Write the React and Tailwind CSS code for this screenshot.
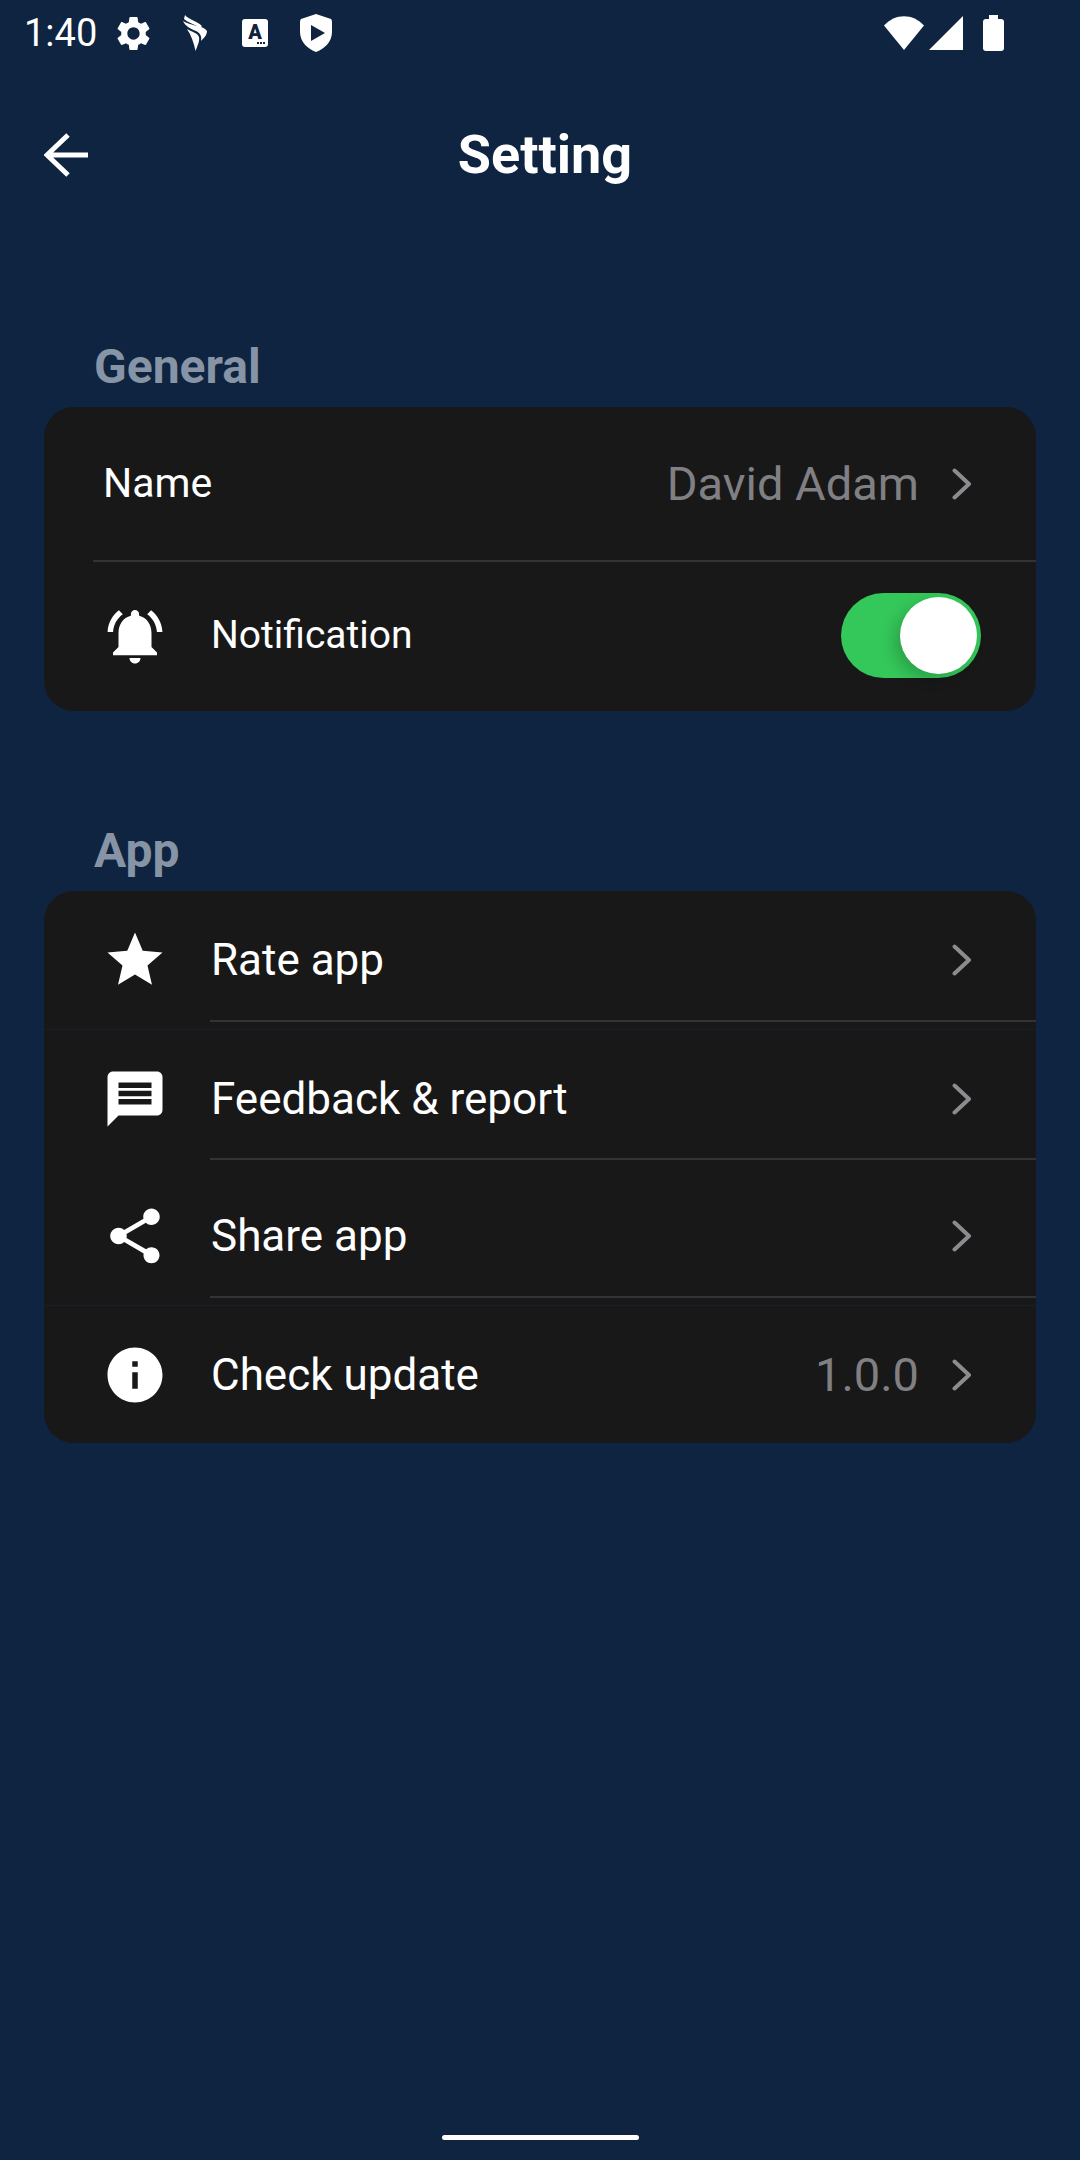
import React from "react";

const GEAR = "M19.14 12.94c.04-.3.06-.61.06-.94 0-.32-.02-.64-.07-.94l2.03-1.58c.18-.14.23-.41.12-.61l-1.92-3.32c-.12-.22-.37-.29-.59-.22l-2.39.96c-.5-.38-1.03-.7-1.62-.94l-.36-2.54c-.04-.24-.24-.41-.48-.41h-3.84c-.24 0-.43.17-.47.41l-.36 2.54c-.59.24-1.13.57-1.62.94l-2.39-.96c-.22-.08-.47 0-.59.22L2.74 8.87c-.12.21-.08.47.12.61l2.03 1.58c-.05.3-.09.63-.09.94s.02.64.07.94l-2.03 1.58c-.18.14-.23.41-.12.61l1.92 3.32c.12.22.37.29.59.22l2.39-.96c.5.38 1.03.7 1.62.94l.36 2.54c.05.24.24.41.48.41h3.84c.24 0 .44-.17.47-.41l.36-2.54c.59-.24 1.13-.56 1.62-.94l2.39.96c.22.08.47 0 .59-.22l1.92-3.32c.12-.22.07-.47-.12-.61l-2.01-1.58zM12 15.6c-1.98 0-3.6-1.62-3.6-3.6s1.62-3.6 3.6-3.6 3.6 1.62 3.6 3.6-1.62 3.6-3.6 3.6z";
const BELL = "M7.58 4.08L6.15 2.65C3.75 4.48 2.17 7.3 2.03 10.5h2c.15-2.65 1.51-4.97 3.55-6.42zm12.39 6.42h2c-.15-3.2-1.73-6.02-4.12-7.85l-1.42 1.43c2.02 1.45 3.39 3.77 3.54 6.42zM18 11c0-3.07-1.64-5.64-4.5-6.32V4c0-.83-.67-1.5-1.5-1.5s-1.5.67-1.5 1.5v.68C7.63 5.36 6 7.92 6 11v5l-2 2v1h16v-1l-2-2v-5zm-6 11c.14 0 .27-.01.4-.04.65-.14 1.18-.58 1.44-1.18.1-.24.15-.5.15-.78h-4c.01 1.1.9 2 2.01 2z";
const STAR = "M12 17.27L18.18 21l-1.64-7.03L22 9.24l-7.19-.61L12 2 9.19 8.63 2 9.24l5.46 4.73L5.82 21z";
const MESSAGE = "M20 2H4c-1.1 0-1.99.9-1.99 2L2 22l4-4h14c1.1 0 2-.9 2-2V4c0-1.1-.9-2-2-2zm-2 12H6v-2h12v2zm0-3H6V9h12v2zm0-3H6V6h12v2z";
const SHARE = "M18 16.08c-.76 0-1.44.3-1.96.77L8.91 12.7c.05-.23.09-.46.09-.7s-.04-.47-.09-.7l7.05-4.11c.54.5 1.25.81 2.04.81 1.66 0 3-1.34 3-3s-1.34-3-3-3-3 1.34-3 3c0 .24.04.47.09.7L8.04 9.81C7.5 9.31 6.79 9 6 9c-1.66 0-3 1.34-3 3s1.34 3 3 3c.79 0 1.5-.31 2.04-.81l7.12 4.16c-.05.21-.08.43-.08.65 0 1.61 1.31 2.92 2.92 2.92 1.61 0 2.92-1.31 2.92-2.92s-1.31-2.92-2.92-2.92z";
const INFO = "M12 2C6.48 2 2 6.48 2 12s4.48 10 10 10 10-4.48 10-10S17.52 2 12 2zm1 15h-2v-6h2v6zm0-8h-2V7h2v2z";

const Icon = ({ d }) => (
  <svg viewBox="0 0 24 24" className="w-[66px] h-[66px] shrink-0 fill-white">
    <path d={d} />
  </svg>
);

const Chevron = () => (
  <svg viewBox="0 0 20 32" className="w-[20px] h-[32px] shrink-0 fill-none stroke-[#8c8c90] stroke-[4]">
    <path d="M2.5 2.5 L17 16 L2.5 29.5" strokeLinecap="round" strokeLinejoin="round" />
  </svg>
);

const StatusBar = () => (
  <div className="h-[66px] flex items-center pl-[24px] pr-[76px] text-white">
    <span className="text-[38px] leading-none font-normal w-[75px]">1:40</span>
    <svg viewBox="0 0 24 24" className="w-[41px] h-[41px] ml-[14px] fill-white">
      <path d={GEAR} />
    </svg>
    <svg viewBox="0 0 26 36" className="w-[26px] h-[36px] ml-[28px] fill-white">
      <path d="M3 0 C6 4 15 6 20 11 L18 13 C13 9 6 8 2 4 Z" />
      <path d="M1 6 C8 11 21 10 25 16 C25 20 22 23 19 26 C20 21 18 18 14 16 C9 14 3 11 1 6 Z" />
      <path d="M5 14 C10 17 16 18 17 22 C18 26 15 32 13.5 36 C12 28 9 20 5 14 Z" />
    </svg>
    <div className="w-[26px] h-[28px] ml-[34px] bg-white rounded-[3px] relative flex justify-center">
      <span className="text-[#0e2440] text-[20px] leading-[26px] font-black">A</span>
      <span className="absolute right-[3px] bottom-[3px] flex gap-[1px]">
        <span className="w-[2px] h-[2px] bg-[#0e2440]"></span>
        <span className="w-[2px] h-[2px] bg-[#0e2440]"></span>
        <span className="w-[2px] h-[2px] bg-[#0e2440]"></span>
      </span>
    </div>
    <svg viewBox="0 0 32 38" className="w-[32px] h-[38px] ml-[32px]">
      <path className="fill-white" d="M16 0 L31 5 C32 6 32 7 32 9 V18 C32 28 24 35 16 38 C8 35 0 28 0 18 V9 C0 7 0 6 1 5 Z" />
      <path className="fill-[#0e2440]" d="M11 11 L25 19 L11 27 Z" />
    </svg>
    <div className="flex-1" />
    <svg viewBox="0 0 40 34" className="w-[40px] h-[34px] fill-white">
      <path d="M0 9.5 C11 -3 29 -3 40 9.5 L20 34 Z" />
    </svg>
    <svg viewBox="0 0 34 34" className="w-[34px] h-[34px] ml-[5px] fill-white">
      <path d="M34 0 V34 H0 Z" />
    </svg>
    <div className="ml-[20px] w-[21px] h-[36px] flex flex-col items-center">
      <div className="w-[9px] h-[4px] bg-white"></div>
      <div className="w-[21px] h-[32px] bg-white rounded-[3px]"></div>
    </div>
  </div>
);

// rows sit flush in the card, the seam between some of them shows as a faint line
const NavRow = ({ icon, label, value, line, seam }) => (
  <div className={seam ? "h-[138px] pt-[9px] flex flex-col border-t border-[#15202c]" : "h-[138px] pt-[9px] flex flex-col"}>
    <div className="flex-1 flex items-center pl-[58px] pr-[64px]">
      <Icon d={icon} />
      <span className="ml-[43px] text-[44px] leading-none text-white flex-1">{label}</span>
      {value && <span className="text-[47px] leading-none text-[#808084] mr-[33px]">{value}</span>}
      <Chevron />
    </div>
    <div className={line ? "ml-[166px] h-[2px] bg-[#333333] mb-[7px]" : "h-[2px] mb-[7px]"}></div>
  </div>
);

export default function App() {
  return (
    <div className="w-[1080px] h-[2160px] bg-[#0e2440] flex flex-col font-['Roboto',sans-serif] overflow-hidden">
      <StatusBar />

      <div className="mt-[45px] h-[88px] flex items-center pl-[44px] pr-[78px]">
        <svg viewBox="0 0 44 44" className="w-[44px] h-[44px] fill-none stroke-white stroke-[5]">
          <path d="M44 22 H3 M24 2 L3 22 L24 42" strokeLinejoin="miter" />
        </svg>
        <h1 className="flex-1 text-center text-[54px] leading-none font-bold text-white">Setting</h1>
      </div>

      <div className="mt-[143px] pl-[94px] text-[48px] leading-[50px] font-bold text-[#8694a5]">General</div>
      <div className="mt-[15px] mx-[44px] h-[304px] bg-[#181818] rounded-[30px] flex flex-col">
        <div className="h-[153px] flex items-center pl-[59px] pr-[64px]">
          <span className="text-[41px] leading-none text-white flex-1">Name</span>
          <span className="text-[47px] leading-none text-[#808084] mr-[33px]">David Adam</span>
          <Chevron />
        </div>
        <div className="ml-[49px] h-[2px] bg-[#333333]"></div>
        <div className="flex-1 flex items-center pl-[58px] pr-[55px] pb-[2px]">
          <Icon d={BELL} />
          <span className="ml-[43px] text-[39px] leading-none text-white flex-1">Notification</span>
          <div className="w-[140px] h-[85px] rounded-full bg-[#34c759] flex items-center justify-end pr-[4px]">
            <div className="w-[77px] h-[77px] rounded-full bg-white shadow-[-6px_6px_14px_rgba(0,0,0,0.18)]"></div>
          </div>
        </div>
      </div>

      <div className="mt-[115px] pl-[94px] text-[48px] leading-[50px] font-bold text-[#8694a5]">App</div>
      <div className="mt-[15px] mx-[44px] h-[552px] bg-[#181818] rounded-[30px] flex flex-col overflow-hidden">
        <NavRow icon={STAR} label="Rate app" line />
        <NavRow icon={MESSAGE} label="Feedback & report" line seam />
        <NavRow icon={SHARE} label="Share app" line />
        <NavRow icon={INFO} label="Check update" value="1.0.0" seam />
      </div>

      <div className="mt-auto mb-[20px] mx-auto w-[197px] h-[5px] bg-white rounded-full"></div>
    </div>
  );
}
